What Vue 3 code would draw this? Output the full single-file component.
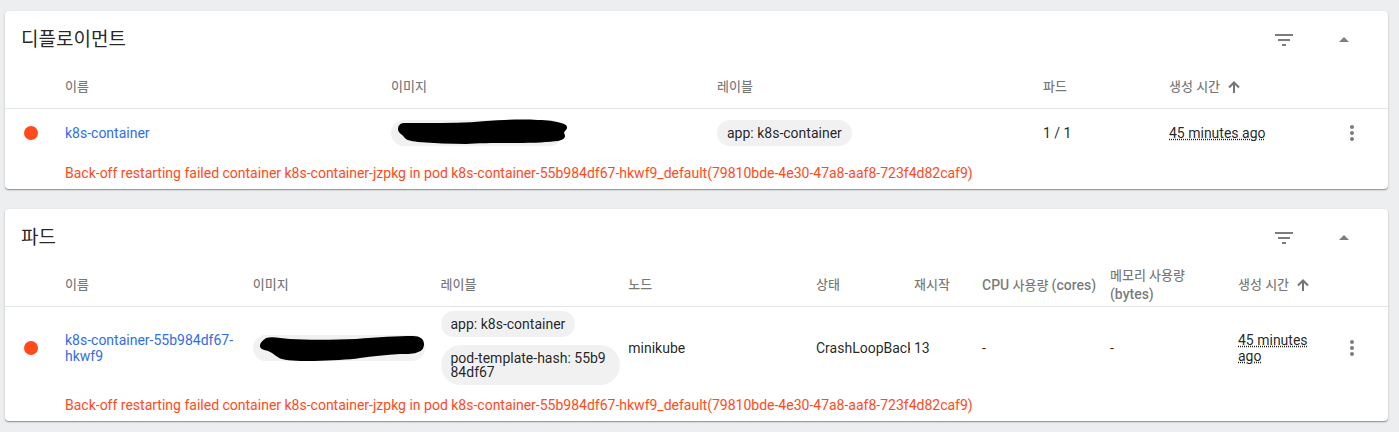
<script setup>
const error =
  'Back-off restarting failed container k8s-container-jzpkg in pod k8s-container-55b984df67-hkwf9_default(79810bde-4e30-47a8-aaf8-723f4d82caf9)'

const cards = [
  {
    title: '디플로이먼트',
    columns: [
      { key: 'name', parts: ['이름'] },
      { key: 'image', parts: ['이미지'] },
      { key: 'labels', parts: ['레이블'] },
      { key: 'pods', parts: ['파드'] },
      { key: 'created wide', parts: ['생성 시간'], sorted: true }
    ],
    row: {
      name: 'k8s-container',
      labels: ['app: k8s-container'],
      cells: [{ text: '1 / 1' }],
      scribble:
        'M18 11C14 11 12 14 12 17C12 21 16 22 18 25C20 28 24 29 32 30C48 31 64 32 80 32C92 31 110 31 130 31C148 31 164 30 172 29C177 28 179 26 179 24C179 22 177 21 179 19C183 16 181 12 175 11C168 9 162 8 152 8C134 7 116 8 100 9C80 11 60 11 40 11Z'
    }
  },
  {
    title: '파드',
    columns: [
      { key: 'name', parts: ['이름'] },
      { key: 'image', parts: ['이미지'] },
      { key: 'labels', parts: ['레이블'] },
      { key: 'node', parts: ['노드'] },
      { key: 'status', parts: ['상태'] },
      { key: 'restarts', parts: ['재시작'] },
      { key: 'usage', parts: ['CPU', '사용량', '(cores)'] },
      { key: 'usage', parts: ['메모리 사용량', '(bytes)'] },
      { key: 'created', parts: ['생성 시간'], sorted: true }
    ],
    row: {
      name: 'k8s-container-55b984df67-hkwf9',
      labels: ['app: k8s-container', 'pod-template-hash: 55b984df67'],
      cells: [
        { text: 'minikube' },
        { text: 'CrashLoopBackOff', clip: true },
        { text: '13' },
        { text: '-' },
        { text: '-' }
      ],
      scribble:
        'M18 11C16 13 12 15 12 19C12 22 16 23 20 24C26 26 29 31 34 32C42 34 54 34 66 34C84 33 100 33 112 31C124 29 138 28 152 27C160 27 166 27 170 25C174 24 176 21 176 17C176 12 172 9 165 9C150 9 130 10 108 12C84 13 58 13 42 12C32 11 24 9 18 11Z'
    }
  }
]

const isLatin = (text) => /[A-Za-z]/.test(text)
</script>

<template>
  <main class="page">
    <section v-for="card in cards" :key="card.title" class="card">
      <header class="card-header">
        <h2 class="title">{{ card.title }}</h2>
        <div class="actions">
          <button type="button" class="icon-button" aria-label="필터">
            <svg viewBox="0 0 24 24" width="24" height="24"><path d="M10 18h4v-2h-4v2zM3 6v2h18V6H3zm3 7h12v-2H6v2z" /></svg>
          </button>
          <button type="button" class="icon-button" aria-label="접기">
            <svg viewBox="0 0 24 24" width="24" height="24"><path d="M7 14l5-5 5 5z" /></svg>
          </button>
        </div>
      </header>

      <table class="table">
        <colgroup>
          <col class="col-state" />
          <col v-for="(column, i) in card.columns" :key="i" :class="column.key.split(' ').map((k) => 'col-' + k)" />
          <col class="col-menu" />
        </colgroup>
        <thead>
          <tr>
            <td></td>
            <th v-for="(column, i) in card.columns" :key="i" scope="col">
              <span class="heading">
                <span><template v-for="(part, n) in column.parts" :key="n"><span :class="{ latin: isLatin(part) }">{{ part }}</span>{{ ' ' }}</template></span>
                <svg v-if="column.sorted" class="sort" viewBox="0 0 12 12" width="12" height="12">
                  <path d="M6 12V2M1 6.500L6 1.500L11 6.500" />
                </svg>
              </span>
            </th>
            <td></td>
          </tr>
        </thead>
        <tbody>
          <tr class="item">
            <td><span class="state"></span></td>
            <td><a href="#" class="link">{{ card.row.name }}</a></td>
            <td>
              <div class="chip image-chip">
                <svg class="scribble" viewBox="0 0 190 40" width="190" height="40"><path :d="card.row.scribble" /></svg>
              </div>
            </td>
            <td>
              <div class="chips">
                <span v-for="label in card.row.labels" :key="label" class="chip">{{ label }}</span>
              </div>
            </td>
            <td v-for="(cell, i) in card.row.cells" :key="i">
              <div :class="{ clip: cell.clip }">{{ cell.text }}</div>
            </td>
            <td><span class="time">45 minutes ago</span></td>
            <td>
              <button type="button" class="menu" aria-label="메뉴">
                <svg viewBox="0 0 24 24" width="24" height="24"><path d="M12 8c1.100 0 2-.9 2-2s-.9-2-2-2-2 .9-2 2 .9 2 2 2zm0 2c-1.100 0-2 .9-2 2s.9 2 2 2 2-.9 2-2-.9-2-2-2zm0 6c-1.100 0-2 .9-2 2s.9 2 2 2 2-.9 2-2-.9-2-2-2z" /></svg>
              </button>
            </td>
          </tr>
          <tr class="message">
            <td></td>
            <td :colspan="card.columns.length + 1">{{ error }}</td>
          </tr>
        </tbody>
      </table>
    </section>
  </main>
</template>

<style>
body {
  margin: 0;
  background: #eceef0;
}
</style>

<style scoped>
.page {
  display: flex;
  flex-direction: column;
  gap: 20px;
  padding: 11px 11px 11px 5px;
  font: 14px/16px Roboto, 'Noto Sans CJK KR', sans-serif;
  color: rgba(0, 0, 0, 0.87);
}

.card {
  background: #fff;
  border-radius: 4px;
  box-shadow: 0 1px 1px rgba(0, 20, 20, 0.35), 0 1px 3px rgba(0, 0, 0, 0.12);
}

.card-header {
  display: flex;
  align-items: center;
  justify-content: space-between;
  box-sizing: border-box;
  height: 55px;
  padding: 2px 32px 0 16px;
}

.title {
  margin: 0;
  font-size: 19px;
  line-height: 24px;
  font-weight: 400;
}

.actions {
  display: flex;
  gap: 36px;
}

.icon-button,
.menu {
  display: block;
  margin: 0;
  padding: 0;
  border: 0;
  background: none;
}

.icon-button svg,
.menu svg {
  display: block;
  fill: #7d7d7d;
}

.table {
  width: 100%;
  table-layout: fixed;
  border-collapse: separate;
  border-spacing: 0;
}

.col-state {
  width: 60px;
}

.col-pods {
  width: 126px;
}

.col-status {
  width: 98px;
}

.col-restarts {
  width: 68px;
}

.col-usage {
  width: 128px;
}

.col-created {
  width: 93px;
}

.col-wide {
  width: 162px;
}

.col-menu {
  width: 57px;
}

th,
td {
  padding: 0;
  text-align: left;
  vertical-align: middle;
}

thead th,
thead td {
  height: 42px;
  border-bottom: 1px solid #e4e5e5;
}

th {
  padding-right: 12px;
  font-size: 13px;
  line-height: 18px;
  font-weight: 500;
  color: rgba(0, 0, 0, 0.54);
}

.latin {
  font-size: 14px;
}

.heading {
  display: flex;
  align-items: center;
  gap: 8px;
}

.sort {
  flex: none;
  fill: none;
  stroke: #757575;
  stroke-width: 2;
}

.item td {
  height: 48px;
}

.state {
  display: block;
  width: 14px;
  height: 14px;
  margin-left: 19px;
  border-radius: 50%;
  background: #ff4a1c;
}

.link {
  color: #326de6;
  text-decoration: none;
}

.chips {
  display: flex;
  flex-direction: column;
  align-items: flex-start;
  gap: 8px;
  padding: 4px 8px 4px 0;
}

.chip {
  padding: 6px 10px;
  border-radius: 20px;
  background: #f1f1f1;
  line-height: 14px;
  word-break: break-all;
}

.image-chip {
  position: relative;
  width: 152px;
  height: 14px;
}

.scribble {
  position: absolute;
  top: -8px;
  left: -5px;
}

.clip {
  margin-right: 4px;
  overflow: hidden;
  white-space: nowrap;
}

.time {
  text-decoration: underline dotted;
}

.menu {
  margin-left: 9px;
}

.message td {
  height: 32px;
  color: #ff4a1c;
}
</style>
